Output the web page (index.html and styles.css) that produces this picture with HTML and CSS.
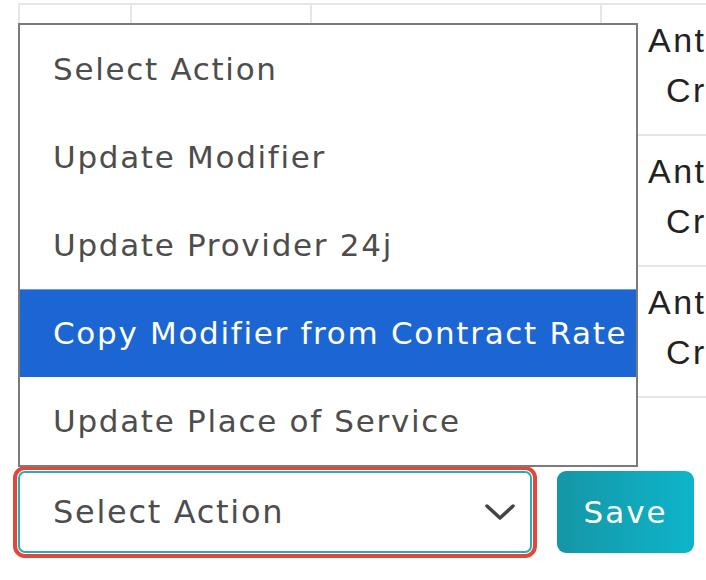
FILE: index.html
```html
<!DOCTYPE html>
<html lang="en">
<head>
  <meta charset="UTF-8">
  <title>Claim Actions</title>
  <link rel="stylesheet" href="styles.css">
</head>
<body>
  <div class="page">

    <div class="claims">
      <div class="claim-row">
        <div class="cell"></div>
        <div class="cell"></div>
        <div class="cell"></div>
        <div class="cell payer">
          <div>Anthem</div>
          <div class="payer-2">Cross</div>
        </div>
      </div>
      <div class="claim-row">
        <div class="cell"></div>
        <div class="cell"></div>
        <div class="cell"></div>
        <div class="cell payer">
          <div>Anthem</div>
          <div class="payer-2">Cross</div>
        </div>
      </div>
      <div class="claim-row">
        <div class="cell"></div>
        <div class="cell"></div>
        <div class="cell"></div>
        <div class="cell payer">
          <div>Anthem</div>
          <div class="payer-2">Cross</div>
        </div>
      </div>
    </div>

    <div class="actions">
      <div class="select-box">
        <span>Select Action</span>
        <svg class="chevron" width="30" height="16" viewBox="0 0 30 16">
          <polyline points="2,2 15,14 28,2" fill="none" stroke="#444" stroke-width="3.5" stroke-linecap="round" stroke-linejoin="round"/>
        </svg>
      </div>
      <button class="save">Save</button>
    </div>

    <!-- open options list of the select above -->
    <ul class="menu">
      <li>Select Action</li>
      <li>Update Modifier</li>
      <li>Update Provider 24j</li>
      <li class="active">Copy Modifier from Contract Rate</li>
      <li>Update Place of Service</li>
    </ul>

  </div>
</body>
</html>
```

FILE: styles.css
```css
* {
  box-sizing: border-box;
}
body {
  margin: 0;
  background: #fff;
  font-family: 'DejaVu Sans', sans-serif;
}
.page {
  position: relative;
  width: 706px;
  height: 580px;
  overflow: hidden;
}
.claims {
  margin: 3px 0 0 18px;
  border-top: 2px solid #e3e6ea;
  border-left: 2px solid #e3e6ea;
}
.claim-row {
  display: grid;
  grid-template-columns: 112px 180px 290px 1fr;
  height: 131px;
  border-bottom: 2px solid #e3e6ea;
}
.cell {
  border-right: 2px solid #e3e6ea;
}
.cell.payer {
  border-right: none;
  overflow: hidden;
  padding: 10px 0 0 46px;
  font-family: 'Liberation Sans', Arial, sans-serif;
  font-size: 34px;
  letter-spacing: 2.5px;
  line-height: 50px;
  color: #222;
  white-space: nowrap;
}
.payer-2 {
  padding-left: 18px;
}
.actions {
  display: flex;
  align-items: center;
  gap: 25px;
  margin: 73px 0 0 18px;
}
.select-box {
  display: flex;
  align-items: center;
  justify-content: space-between;
  width: 514px;
  height: 82px;
  padding: 0 15px 0 33px;
  border: 2px solid #2fa9b5;
  border-radius: 7px;
  outline: 4px solid #e0483a;
  outline-offset: 1px;
  font-size: 32px;
  letter-spacing: 1.7px;
  color: #4d4d4d;
}
.save {
  width: 137px;
  height: 82px;
  border: none;
  border-radius: 9px;
  background: linear-gradient(90deg, #1596a6, #0db5ca);
  color: #fff;
  font-family: 'DejaVu Sans', sans-serif;
  font-size: 31px;
  letter-spacing: 2px;
  cursor: pointer;
}
.menu {
  position: absolute;
  left: 18px;
  top: 23px;
  width: 620px;
  margin: 0;
  padding: 0;
  list-style: none;
  background: #fff;
  border: 2px solid #7b7b7b;
}
.menu li {
  height: 88px;
  line-height: 88px;
  padding-left: 33px;
  font-size: 31px;
  letter-spacing: 1.7px;
  color: #4d4d4d;
  white-space: nowrap;
}
.menu li.active {
  background: #1b66d3;
  border-top: 1px solid #6a9de6;
  line-height: 86px;
  color: #fff;
}
```
